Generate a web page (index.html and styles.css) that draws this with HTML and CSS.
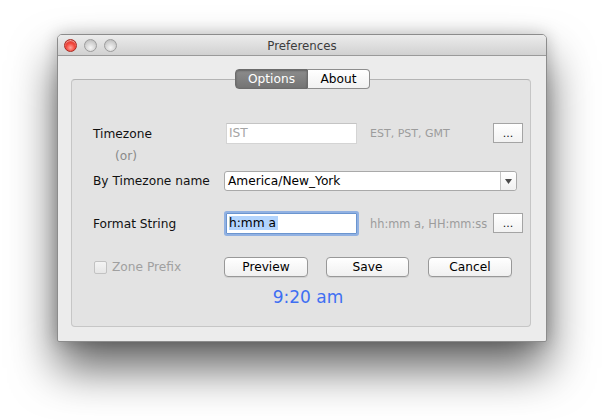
FILE: index.html
```html
<!DOCTYPE html>
<html>
<head>
<meta charset="utf-8">
<link rel="stylesheet" href="styles.css">
</head>
<body>
<div class="stage">
  <div class="window">
    <div class="titlebar">
      <div class="lights">
        <span class="light red"></span>
        <span class="light gray"></span>
        <span class="light gray"></span>
      </div>
      <div class="title">Preferences</div>
      <div></div>
    </div>
    <div class="content">
      <div class="tabs">
        <div class="tab selected">Options</div>
        <div class="tab">About</div>
      </div>
      <div class="group">
        <div class="row row1">
          <div class="label">Timezone</div>
          <div class="field ist">IST</div>
          <div class="hint">EST, PST, GMT</div>
          <div class="dots">...</div>
        </div>
        <div class="or">(or)</div>
        <div class="row row2">
          <div class="label label2">By Timezone name</div>
          <div class="combo">
            <span class="combo-text">America/New_York</span>
            <span class="combo-arrow"><svg width="7" height="5" viewBox="0 0 7 5"><path d="M0 0H7L3.5 5Z" fill="#4a4a4a"/></svg></span>
          </div>
        </div>
        <div class="row row3">
          <div class="label">Format String</div>
          <div class="field focused"><span class="sel">h:mm a</span></div>
          <div class="hint hint2">hh:mm a, HH:mm:ss</div>
          <div class="dots">...</div>
        </div>
        <div class="row row4">
          <div class="check">
            <span class="box"></span>
            <span class="check-label">Zone Prefix</span>
          </div>
          <div class="btn preview">Preview</div>
          <div class="btn save">Save</div>
          <div class="btn cancel">Cancel</div>
        </div>
        <div class="time">9:20 am</div>
      </div>
    </div>
  </div>
</div>
</body>
</html>
```
FILE: styles.css
```css
html, body {
  margin: 0;
  padding: 0;
  background: #ffffff;
}
body {
  font-family: "DejaVu Sans", "Liberation Sans", sans-serif;
  font-size: 12.2px;
  color: #111;
  width: 604px;
  height: 420px;
  overflow: hidden;
}
.stage {
  padding: 34px 0 0 57px;
}
.window {
  width: 490px;
  height: 308px;
  box-sizing: border-box;
  border: 1px solid #8c8c8c;
  border-radius: 5px 5px 2px 2px;
  background: #ececec;
  box-shadow: 0 26px 46px rgba(0,0,0,0.62), 0 0 16px rgba(0,0,0,0.2);
  overflow: hidden;
}
.titlebar {
  height: 21px;
  box-sizing: border-box;
  border-bottom: 1px solid #9a9a9a;
  background: linear-gradient(#ececec, #d1d1d1);
  display: grid;
  grid-template-columns: 1fr auto 1fr;
  align-items: center;
}
.lights {
  display: flex;
  gap: 7px;
  padding-left: 6px;
  padding-top: 1px;
}
.light {
  width: 13px;
  height: 13px;
  border-radius: 50%;
  box-sizing: border-box;
}
.light.red {
  background: radial-gradient(circle at 50% 70%, #ffa49a 0%, #f4483e 45%, #c8251c 100%);
  border: 1px solid #a82a22;
  box-shadow: inset 0 1px 1px rgba(255,255,255,0.6);
}
.light.gray {
  background: radial-gradient(circle at 50% 70%, #f6f6f6 0%, #d2d2d2 55%, #b4b4b4 100%);
  border: 1px solid #9c9c9c;
}
.title {
  font-size: 11.8px;
  color: #3c3c3c;
  padding-top: 1px;
}
.content {
  padding: 13px 15px 13px 13px;
}
.tabs {
  display: flex;
  justify-content: center;
  position: relative;
  z-index: 1;
  margin-bottom: -10px;
  padding-left: 3px;
}
.tab {
  height: 20px;
  box-sizing: border-box;
  line-height: 18px;
  border: 1px solid #8e8e8e;
  background: linear-gradient(#ffffff, #f1f1f1);
  color: #000;
  font-size: 12.2px;
}
.tab.selected {
  width: 73px;
  text-align: center;
  border-radius: 4px 0 0 4px;
  background: linear-gradient(#8d8d8d, #747474);
  color: #fff;
  border-color: #6c6c6c;
  box-shadow: inset 0 1px 2px rgba(0,0,0,0.3);
}
.tab:last-child {
  width: 62px;
  text-align: center;
  border-left: none;
  border-radius: 0 4px 4px 0;
}
.group {
  height: 248px;
  box-sizing: border-box;
  border: 1px solid #c6c6c6;
  border-top-color: #b4b4b4;
  border-radius: 4px;
  background: #e3e3e3;
  padding: 43px 7px 0 21px;
}
.row {
  display: flex;
  align-items: center;
}
.label {
  width: 133px;
  flex: none;
}
.label2 {
  width: 131px;
}
.field {
  width: 131px;
  height: 21px;
  box-sizing: border-box;
  border: 1px solid #d4d4d4;
  background: #fff;
  padding-left: 2px;
  line-height: 19px;
  flex: none;
}
.ist {
  color: #a5a5a5;
  border-top-color: #c4c4c4;
}
.hint {
  margin-left: 13px;
  flex: 1;
  color: #9c9c9c;
  font-size: 11px;
  white-space: nowrap;
}
.hint2 {
  font-size: 11.4px;
}
.dots {
  width: 30px;
  height: 20px;
  box-sizing: border-box;
  border: 1px solid #a4a4a4;
  background: linear-gradient(#ffffff, #f2f2f2);
  text-align: center;
  line-height: 19px;
  font-size: 11px;
  flex: none;
}
.row1 .dots {
  margin-top: -1px;
}
.or {
  margin: 5px 0 0 22px;
  height: 14px;
  line-height: 14px;
  color: #8a8a8a;
}
.row2 {
  margin-top: 8px;
}
.combo {
  width: 293px;
  height: 20px;
  box-sizing: border-box;
  border: 1px solid #a9a9a9;
  border-radius: 3px;
  background: #fff;
  display: flex;
  align-items: stretch;
}
.combo-text {
  flex: 1;
  padding-left: 3px;
  line-height: 18px;
  color: #000;
}
.combo-arrow {
  width: 15px;
  border-left: 1px solid #c4c4c4;
  background: linear-gradient(#ffffff, #f0f0f0);
  border-radius: 0 3px 3px 0;
  display: flex;
  align-items: center;
  justify-content: center;
}
.row3 {
  margin-top: 22px;
}
.field.focused {
  border-color: #6b95cf;
  box-shadow: 0 0 0 2px rgba(118,160,225,0.75);
  border-radius: 1px;
}
.sel {
  background: #b3d4fd;
  color: #000;
  padding-right: 2px;
}
.row3 .dots {
  margin-top: -2px;
}
.row4 {
  margin-top: 23px;
}
.check {
  width: 131px;
  display: flex;
  align-items: center;
  padding-left: 1px;
  box-sizing: border-box;
  flex: none;
}
.box {
  width: 13px;
  height: 13px;
  box-sizing: border-box;
  border: 1px solid #c2c2c2;
  border-radius: 2px;
  background: linear-gradient(#f4f4f4, #e6e6e6);
}
.check-label {
  margin-left: 5px;
  color: #a0a0a0;
}
.btn {
  height: 20px;
  box-sizing: border-box;
  border: 1px solid #989898;
  border-radius: 4px;
  background: linear-gradient(#ffffff, #f0f0f0);
  box-shadow: 0 1px 0 rgba(0,0,0,0.08);
  text-align: center;
  line-height: 18px;
  color: #000;
  flex: none;
}
.preview { width: 84px; }
.save { width: 83px; margin-left: 18px; }
.cancel { width: 84px; margin-left: 19px; }
.time {
  margin-top: 9px;
  height: 22px;
  line-height: 22px;
  text-align: center;
  font-size: 17px;
  color: #3f6ff2;
}
```
